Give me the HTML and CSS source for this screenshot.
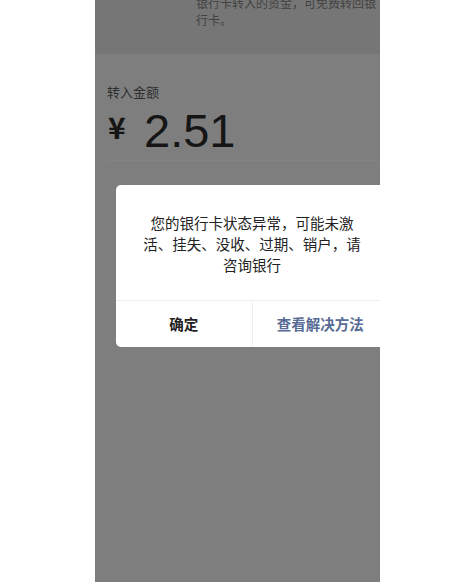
FILE: index.html
```html
<!DOCTYPE html>
<html lang="zh-CN">
  <head>
    <meta charset="UTF-8" />
    <meta name="viewport" content="width=device-width, initial-scale=1.0" />
    <title>转入金额</title>
    <link rel="stylesheet" href="styles.css">
  </head>
  <body>
    <div class="screen">
      <div class="tip">
        <p>银行卡转入的资金，可免费转回银行卡。</p>
      </div>
      <div class="amount-box">
        <div class="label">转入金额</div>
        <div class="amount">
          <span class="yen">¥</span>
          <span class="num">2.51</span>
        </div>
      </div>

      <div class="dialog">
        <div class="msg">您的银行卡状态异常，可能未激活、挂失、没收、过期、销户，请咨询银行</div>
        <div class="btns">
          <div class="btn">确定</div>
          <div class="btn link">查看解决方法</div>
        </div>
      </div>
    </div>
  </body>
</html>
```

FILE: styles.css
```css
body {
  margin: 0;
  background-color: #ffffff;
  font-family: "Noto Sans CJK SC", "Noto Sans", sans-serif;
}

.screen {
  position: relative;
  width: 285px;
  height: 582px;
  margin-left: 95px;
  background-color: #7e7e7e;
  overflow: hidden;
}

.tip {
  height: 54px;
  background-color: #767676;
  overflow: hidden;
}

.tip p {
  width: 184px;
  margin: -6px 0px 0px 101px;
  font-size: 12px;
  line-height: 17px;
  color: #424242;
}

.amount-box {
  margin-left: 12px;
  padding-top: 29px;
  height: 77px;
  border-bottom: 1px solid #838383;
}

.label {
  font-size: 13px;
  line-height: 18px;
  color: #2e2e2e;
}

.amount {
  display: flex;
  align-items: flex-start;
  margin-top: 6px;
  color: #151515;
}

.yen {
  font-size: 30px;
  line-height: 28px;
  font-weight: bold;
  margin: 5px 0px 0px 1px;
  width: 36px;
}

.num {
  font-family: "Liberation Sans", Roboto, sans-serif;
  font-size: 47px;
  line-height: 47px;
}

.dialog {
  position: absolute;
  top: 185px;
  left: 21px;
  width: 272px;
  background-color: #ffffff;
  border-radius: 5px;
}

.msg {
  padding: 27px 24px 25px 24px;
  font-size: 14.5px;
  line-height: 21px;
  text-align: center;
  color: #222222;
}

.btns {
  display: flex;
  border-top: 1px solid #eeeeee;
}

.btn {
  flex: 1;
  height: 46px;
  line-height: 46px;
  text-align: center;
  font-size: 14.5px;
  font-weight: 600;
  color: #222222;
}

.btn.link {
  border-left: 1px solid #eeeeee;
  color: #576b95;
}
```
